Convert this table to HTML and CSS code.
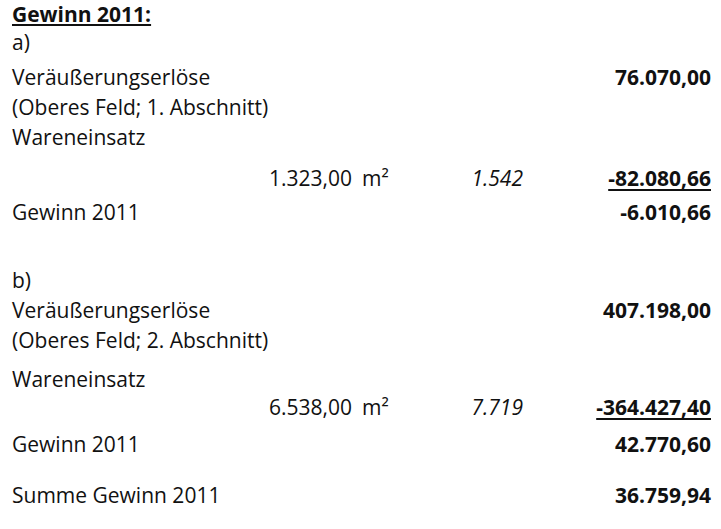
FILE: index.html
```html
<!DOCTYPE html>
<html lang="de">
<head>
<meta charset="utf-8">
<title>Gewinn 2011</title>
<link rel="stylesheet" href="styles.css">
</head>
<body>
<div class="sheet">
  <div class="label title">Gewinn 2011:</div><div class="amount"></div>
  <div class="label">a)</div><div class="amount"></div>
  <div class="label">Veräußerungserlöse</div><div class="amount bold">76.070,00</div>
  <div class="label">(Oberes Feld; 1. Abschnitt)</div><div class="amount"></div>
  <div class="label">Wareneinsatz</div><div class="amount"></div>
  <div class="qty">1.323,00</div><div class="unit">m²</div><div class="factor">1.542</div><div class="amount bold under">-82.080,66</div>
  <div class="label">Gewinn 2011</div><div class="amount bold">-6.010,66</div>
  <div class="blank"></div>
  <div class="label">b)</div><div class="amount"></div>
  <div class="label">Veräußerungserlöse</div><div class="amount bold">407.198,00</div>
  <div class="label">(Oberes Feld; 2. Abschnitt)</div><div class="amount"></div>
  <div class="label">Wareneinsatz</div><div class="amount"></div>
  <div class="qty">6.538,00</div><div class="unit">m²</div><div class="factor">7.719</div><div class="amount bold under">-364.427,40</div>
  <div class="label">Gewinn 2011</div><div class="amount bold">42.770,60</div>
  <div class="blank"></div>
  <div class="label">Summe Gewinn 2011</div><div class="amount bold">36.759,94</div>
</div>
</body>
</html>
```
FILE: styles.css
```css
html, body {
  margin: 0;
  padding: 0;
  background: #ffffff;
}
body {
  font-family: "Open Sans", Lato, "Liberation Sans", sans-serif;
  font-size: 21px;
  color: #111111;
}
.sheet {
  display: grid;
  grid-template-columns: 340px 40px 131px 188px;
  grid-template-rows: 26px 28px 35px 30px 30px 41px 34px 34px 34px 30px 30px 39px 28px 37px 25px 26px;
  align-items: end;
  padding-left: 12px;
  line-height: 24px;
}
.label {
  grid-column: 1 / 4;
  white-space: nowrap;
}
.title {
  font-weight: 700;
  text-decoration: underline;
  text-decoration-thickness: 1.5px;
  text-underline-offset: 2px;
}
.amount {
  text-align: right;
  white-space: nowrap;
}
.bold {
  font-weight: 700;
}
.under {
  text-decoration: underline;
  text-decoration-thickness: 1.5px;
  text-underline-offset: 3px;
}
.qty {
  text-align: right;
}
.unit {
  padding-left: 10px;
}
.factor {
  text-align: right;
  font-style: italic;
}
.blank {
  grid-column: 1 / 5;
}
```
